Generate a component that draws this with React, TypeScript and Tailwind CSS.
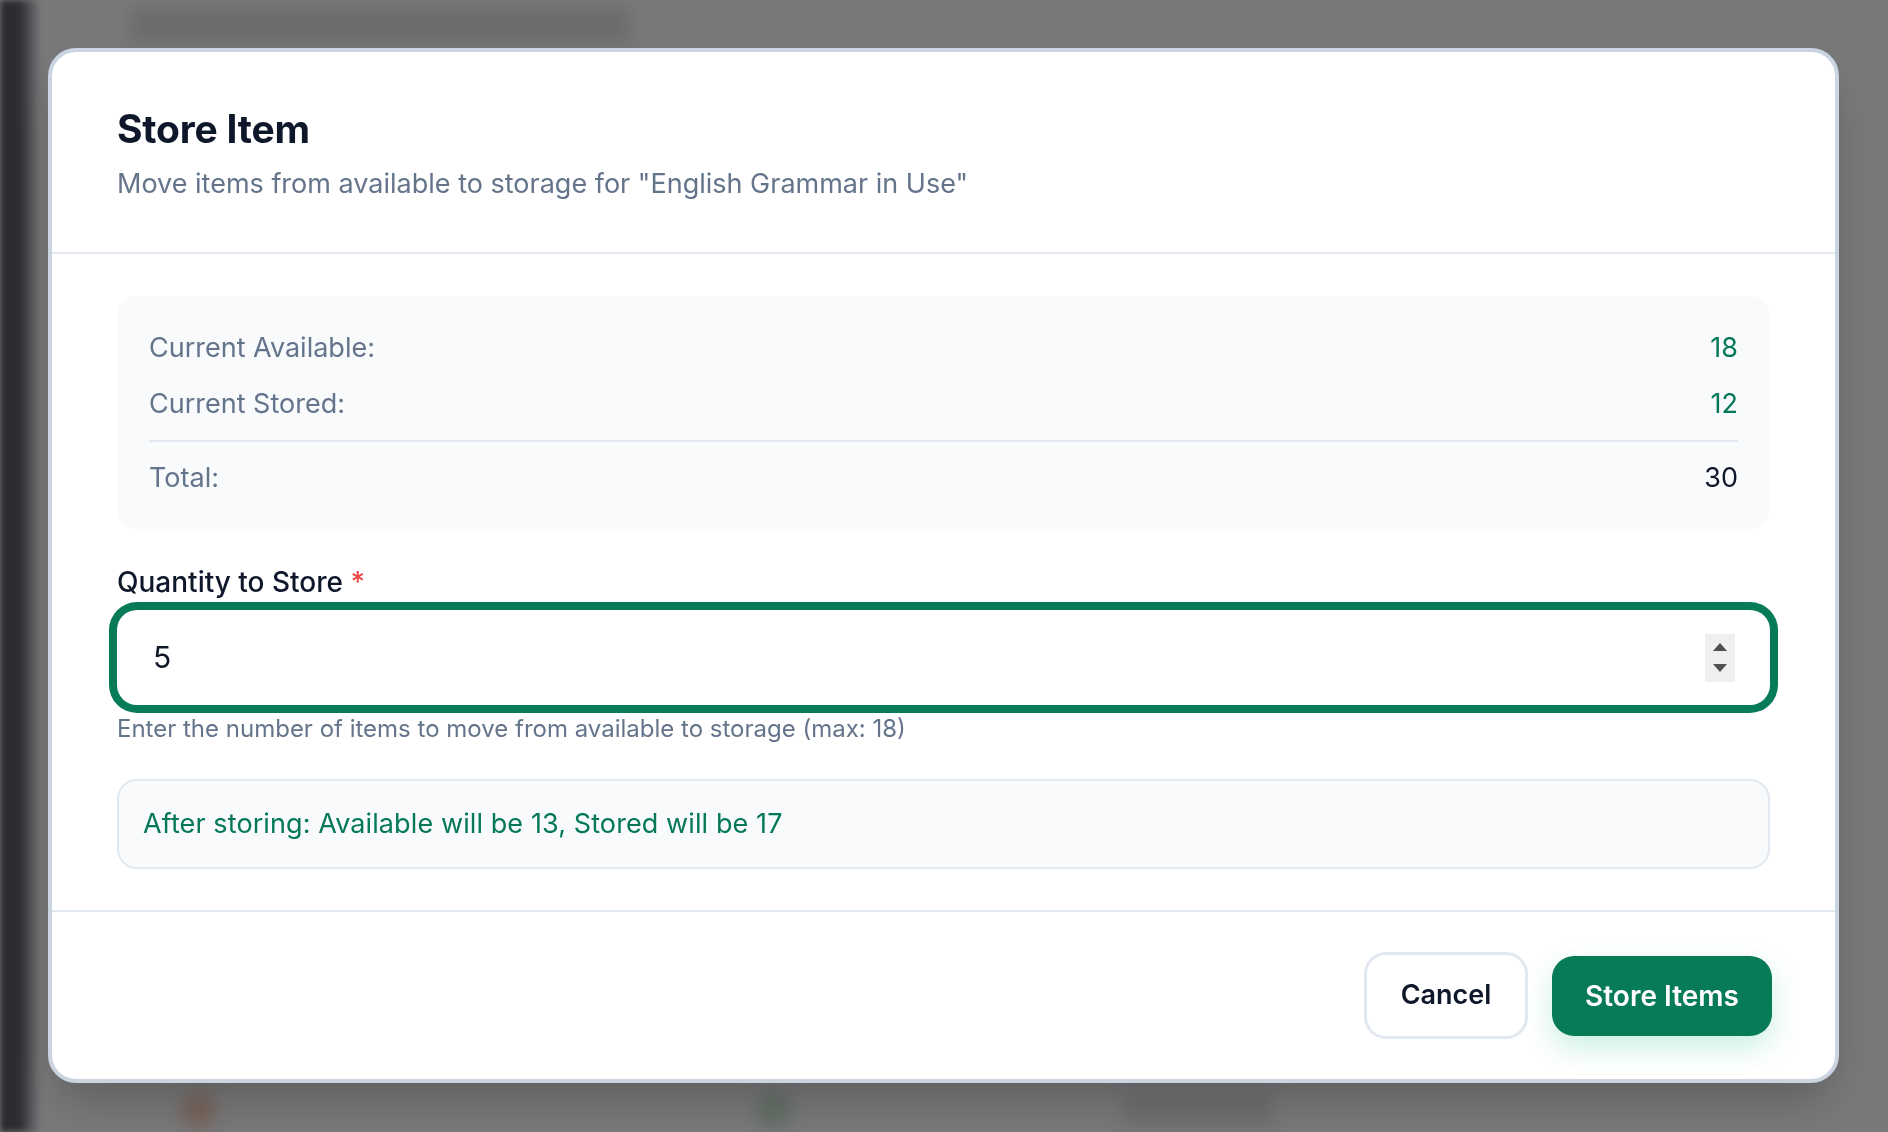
import { useState } from "react";

const FONT = { fontFamily: "Inter, 'Noto Sans', 'Liberation Sans', sans-serif" };

function Backdrop() {
  // blurred page sitting behind the dialog overlay
  return (
    <div className="absolute inset-0 overflow-hidden bg-[#f1f2f4]">
      <div className="flex h-full">
        <div className="w-[40px] bg-gradient-to-r from-[#50545c] via-[#5a5e66] to-[#eceef0] blur-[3px]" />
        <div className="flex-1 flex flex-col blur-[8px]">
          <div className="h-[34px] mt-[8px] ml-[90px] w-[500px] rounded bg-[#d4d7da]" />
          <div className="flex-1" />
          <div className="h-[36px] mb-[4px] flex pl-[140px]">
            <div className="w-[36px] rounded-full bg-[#f0c8b8]" />
            <div className="w-[36px] rounded-full bg-[#c8dccd] ml-[540px]" />
            <div className="w-[150px] rounded bg-[#dcdee1] ml-[330px]" />
          </div>
        </div>
      </div>
    </div>
  );
}

function Spinner() {
  return (
    <div className="w-[30px] h-[48px] bg-[#efefef] flex flex-col items-center justify-center gap-[13px]">
      <svg width="14" height="8" viewBox="0 0 14 8">
        <path d="M7 0 L14 8 L0 8 Z" fill="#505050" />
      </svg>
      <svg width="14" height="8" viewBox="0 0 14 8">
        <path d="M0 0 L14 0 L7 8 Z" fill="#505050" />
      </svg>
    </div>
  );
}

function StatRow({ label, value, green }: { label: string; value: number; green?: boolean }) {
  return (
    <div className="flex items-center justify-between h-[36px] text-[27px] leading-[36px]">
      <span className="text-[#64748b]">{label}</span>
      <span className={green ? "text-[#047857]" : "text-[#0f172a]"}>{value}</span>
    </div>
  );
}

export default function App() {
  const available = 18;
  const stored = 12;
  const [qty, setQty] = useState("5");
  const n = Number(qty) || 0;

  return (
    <div className="relative w-[1888px] h-[1132px] overflow-hidden" style={FONT}>
      <Backdrop />
      <div className="fixed inset-0 bg-[#000000]/50 pt-[48px] pl-[48px]">
        <div className="w-[1791px] rounded-[28px] border-4 border-[#cbd5e1] bg-white shadow-2xl overflow-hidden">
          <div className="px-[65px] pt-[55px] pb-[50px] border-b-2 border-[#e2e8f0]">
            <h2 className="text-[39px] leading-[44px] font-bold text-[#0f172a] tracking-[-0.2px]">Store Item</h2>
            <p className="mt-[15px] text-[27px] leading-[36px] text-[#64748b]">
              Move items from available to storage for "English Grammar in Use"
            </p>
          </div>

          <div className="px-[65px] pt-[42px] pb-[41px] border-b-2 border-[#e2e8f0]">
            <div className="rounded-[20px] bg-[#f8fafc] px-[32px] pt-[34px] pb-[33px]">
              <StatRow label="Current Available:" value={available} green />
              <div className="mt-[20px]">
                <StatRow label="Current Stored:" value={stored} green />
              </div>
              <div className="mt-[18px] border-t-2 border-[#e2e8f0] pt-[18px]">
                <StatRow label="Total:" value={available + stored} />
              </div>
            </div>

            <label className="mt-[35px] block text-[28px] leading-[36px] font-medium text-[#0f172a]">
              Quantity to Store <span className="text-[#ef4444]">*</span>
            </label>
            <div className="mt-[10px] h-[95px] rounded-[20px] bg-white ring-[8px] ring-[#077a57] flex items-center pl-[36px] pr-[35px]">
              <input
                value={qty}
                onChange={(e) => setQty(e.target.value)}
                className="flex-1 bg-transparent outline-none text-[30px] text-[#111827]"
                style={FONT}
              />
              <Spinner />
            </div>
            <p className="mt-[8px] text-[24px] leading-[32px] text-[#64748b]">
              Enter the number of items to move from available to storage (max: {available})
            </p>

            <div className="mt-[34px] h-[90px] rounded-[20px] border-2 border-[#e2e8f0] bg-[#f8fafc] flex items-center px-[24px]">
              <span className="text-[27px] tracking-[0.1px] text-[#047857]">
                After storing: Available will be {available - n}, Stored will be {stored + n}
              </span>
            </div>
          </div>

          <div className="flex items-center justify-end gap-[24px] pr-[63px] pt-[40px] pb-[40px]">
            <button className="w-[164px] h-[87px] rounded-[22px] border-[3px] border-[#e2e8f0] bg-white text-[27px] font-semibold text-[#0f172a]">
              Cancel
            </button>
            <button className="w-[220px] h-[80px] rounded-[22px] bg-[#077a57] text-[28px] font-semibold text-white shadow-[0_12px_28px_rgba(16,185,129,0.22)]">
              Store Items
            </button>
          </div>
        </div>
      </div>
    </div>
  );
}
